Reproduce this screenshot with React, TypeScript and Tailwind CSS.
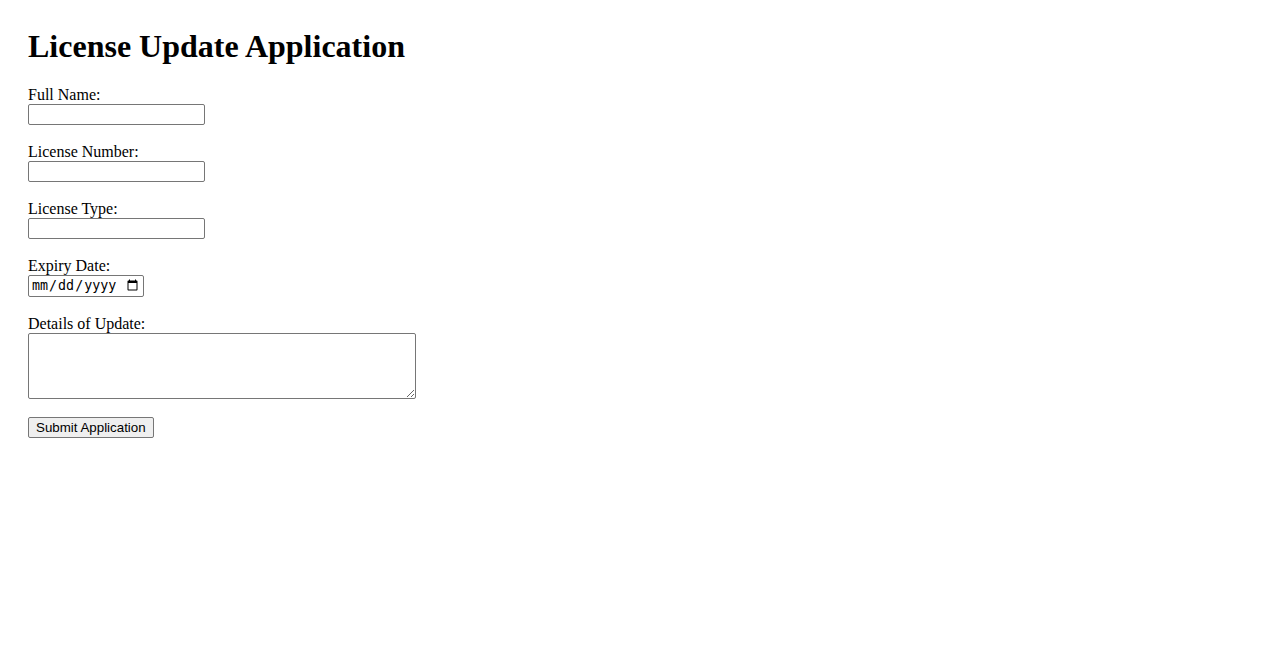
import React from 'react'

const fields = ['Full Name:', 'License Number:', 'License Type:']

const inputBox =
  "border border-[#767676] rounded-[2px] bg-white px-[2px] py-[1px] text-[13.33px] text-black font-['Liberation_Sans',Arial,sans-serif] outline-none"

export default function App() {
  return (
    <div className="min-h-screen bg-white px-[28px] pt-[28px] text-black font-['Liberation_Serif','Times_New_Roman',serif]">
      <h1 className="text-[32px] font-bold leading-[37px] mb-[21px]">License Update Application</h1>

      <form className="flex flex-col items-start gap-[18px]" onSubmit={(e) => e.preventDefault()}>
        {fields.map((f) => (
          <div key={f} className="flex flex-col items-start">
            <label className="text-[16px] leading-[18px]">{f}</label>
            <input type="text" className={`${inputBox} w-[177px] h-[21px]`} />
          </div>
        ))}

        <div className="flex flex-col items-start">
          <label className="text-[16px] leading-[18px]">Expiry Date:</label>
          <input
            type="date"
            className="w-[116px] h-[22px] border border-[#767676] rounded-[2px] bg-white px-[2px] text-[13.33px] font-['DejaVu_Sans_Mono',monospace] outline-none"
          />
        </div>

        <div className="flex flex-col items-start">
          <label className="text-[16px] leading-[18px]">Details of Update:</label>
          <textarea className={`${inputBox} w-[388px] h-[66px] resize`} />
        </div>

        <button
          type="submit"
          className="h-[21px] px-[7px] border border-[#767676] rounded-[2px] bg-[#efefef] text-[13.33px] leading-none font-['Liberation_Sans',Arial,sans-serif]"
        >
          Submit Application
        </button>
      </form>
    </div>
  )
}
